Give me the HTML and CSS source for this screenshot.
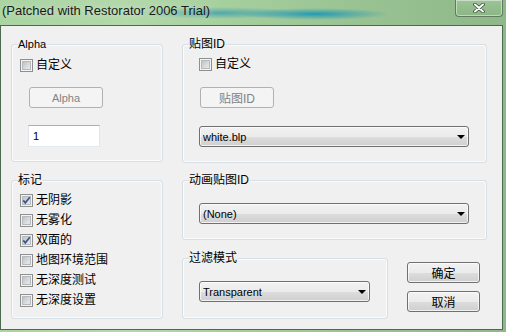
FILE: index.html
```html
<!DOCTYPE html>
<html lang="zh-CN">
<head>
<meta charset="UTF-8" />
<title>Patched with Restorator 2006 Trial</title>
<link rel="stylesheet" href="styles.css">
</head>
<body>
  <div class="window">
    <!-- Title bar -->
    <div class="titlebar">
      <span class="title">(Patched with Restorator 2006 Trial)</span>
      <button class="close" type="button">
        <svg width="12" height="10" viewBox="0 0 12 10">
          <path d="M2 1.5 L10 8.5 M10 1.5 L2 8.5" stroke="#3a4a3a" stroke-width="3.6" stroke-linecap="round" />
          <path d="M2 1.5 L10 8.5 M10 1.5 L2 8.5" stroke="#ffffff" stroke-width="2" stroke-linecap="round" />
        </svg>
      </button>
    </div>

    <!-- Dialog body -->
    <div class="client">
      <div class="layout">
        <section class="group g-alpha">
          <div class="group-title latin">Alpha</div>
          <label class="check-row"><span class="check"></span>自定义</label>
          <button class="btn btn-disabled latin" type="button">Alpha</button>
          <div class="edit latin">1</div>
        </section>

        <section class="group g-tex">
          <div class="group-title">贴图ID</div>
          <label class="check-row"><span class="check"></span>自定义</label>
          <button class="btn btn-disabled" type="button">贴图ID</button>
          <div class="combo combo-wide latin">white.blp</div>
        </section>

        <section class="group g-flags">
          <div class="group-title">标记</div>
          <div class="check-list">
            <label class="check-row"><span class="check checked"><svg width="11" height="11" viewBox="0 0 11 11"><path d="M2.3 5.4 L4.3 7.8 L8.8 2.2" fill="none" stroke="#3f5488" stroke-width="1.7" /></svg></span>无阴影</label>
            <label class="check-row"><span class="check"></span>无雾化</label>
            <label class="check-row"><span class="check checked"><svg width="11" height="11" viewBox="0 0 11 11"><path d="M2.3 5.4 L4.3 7.8 L8.8 2.2" fill="none" stroke="#3f5488" stroke-width="1.7" /></svg></span>双面的</label>
            <label class="check-row"><span class="check"></span>地图环境范围</label>
            <label class="check-row"><span class="check"></span>无深度测试</label>
            <label class="check-row"><span class="check"></span>无深度设置</label>
          </div>
        </section>

        <div class="right-bottom">
          <section class="group g-anim">
            <div class="group-title">动画贴图ID</div>
            <div class="combo combo-wide latin">(None)</div>
          </section>

          <div class="filter-row">
            <section class="group g-filter">
              <div class="group-title">过滤模式</div>
              <div class="combo combo-narrow latin">Transparent</div>
            </section>
            <div class="actions">
              <button class="btn" type="button">确定</button>
              <button class="btn" type="button">取消</button>
            </div>
          </div>
        </div>
      </div>
    </div>
  </div>
</body>
</html>
```

FILE: styles.css
```css
* {
  margin: 0;
  padding: 0;
  box-sizing: border-box;
}

html, body {
  width: 506px;
  height: 332px;
  overflow: hidden;
}

body {
  font-family: "Liberation Sans", "Noto Sans CJK SC", sans-serif;
  font-size: 12px;
  color: #000;
  background: #8db889;
}

.latin {
  font-size: 11px;
}

/* Aero frame */
.window {
  height: 332px;
  background:
    radial-gradient(ellipse 75px 6px at 315px 14px, rgba(30, 150, 180, 0.95), rgba(30, 150, 180, 0) 100%),
    radial-gradient(ellipse 80px 6px at 220px 13px, rgba(50, 155, 175, 0.75), rgba(50, 155, 175, 0) 100%),
    linear-gradient(90deg, #aad4a2 0%, #b3d9ab 25%, #a6cf9e 45%, #9ac393 70%, #8fb88a 100%);
}

.titlebar {
  height: 25px;
  display: flex;
  align-items: flex-start;
}

.title {
  padding: 3px 0 0 2px;
  font-size: 13px;
  line-height: 16px;
  color: #1a1a1a;
  text-shadow: 0 0 6px rgba(255, 255, 255, 0.5);
}

.close {
  margin-left: auto;
  margin-right: 3px;
  width: 48px;
  height: 17px;
  display: flex;
  align-items: center;
  justify-content: center;
  border: 1px solid #5f7d5e;
  border-top: none;
  border-radius: 0 0 4px 4px;
  background: linear-gradient(#9cc496, #8cb686);
  box-shadow: inset 0 0 0 1px rgba(255, 255, 255, 0.45);
}

/* Client area */
.client {
  width: 503px;
  height: 305px;
  border: 1px solid #4d6a4e;
  background: #f0f0f0;
}

.layout {
  display: grid;
  grid-template-columns: 152px 305px;
  grid-template-rows: 118px 139px;
  column-gap: 19px;
  row-gap: 18px;
  padding: 18px 0 0 10px;
}

.group {
  display: flex;
  flex-direction: column;
  align-items: flex-start;
  border: 1px solid #d5dfe5;
  border-radius: 3px;
  box-shadow: inset 0 0 0 1px #fbfbfb;
}

.group-title {
  margin: -7px 0 0 6px;
  padding: 0 1px 0 0;
  line-height: 13px;
  height: 13px;
  background: #f0f0f0;
  white-space: nowrap;
}

.g-alpha { height: 118px; }
.g-tex { height: 119px; }
.g-flags { height: 139px; }
.g-anim { height: 60px; }
.g-filter { width: 206px; height: 61px; }

/* Checkboxes */
.check-row {
  display: flex;
  align-items: center;
  gap: 3px;
  height: 13px;
  line-height: 13px;
  white-space: nowrap;
}

.check {
  width: 13px;
  height: 13px;
  border: 1px solid #8e8f8f;
  background: linear-gradient(135deg, #b3b7bb 0%, #dcdee0 60%, #f1f1f1 100%);
  box-shadow: inset 0 0 0 1px #f4f4f4, inset 0 0 0 2px #b6babe;
}

.check svg {
  display: block;
}

.g-alpha .check-row { margin: 8px 0 0 8px; }
.g-tex .check-row { margin: 7px 0 0 16px; }

.check-list {
  display: flex;
  flex-direction: column;
  gap: 7px;
  margin: 7px 0 0 8px;
}

/* Buttons */
.btn {
  width: 73px;
  height: 21px;
  font-family: inherit;
  font-size: 12px;
  color: #000;
  border: 1px solid #707070;
  border-radius: 3px;
  background: linear-gradient(#f2f2f2 0%, #ebebeb 50%, #dddddd 51%, #cfcfcf 100%);
  box-shadow: inset 0 0 0 1px rgba(255, 255, 255, 0.7);
}

.btn.latin {
  font-size: 11px;
}

.btn-disabled {
  width: 74px;
  color: #838383;
  border-color: #adb2b5;
  background: #f4f4f4;
  box-shadow: none;
}

.g-alpha .btn { margin: 15px 0 0 17px; }
.g-tex .btn { margin: 16px 0 0 17px; }

.edit {
  width: 72px;
  height: 22px;
  margin: 17px 0 0 16px;
  padding: 0 4px;
  line-height: 20px;
  background: #fff;
  border: 1px solid #e2e3ea;
  border-top-color: #abadb3;
  border-bottom-color: #e3e9ef;
}

/* Combo boxes */
.combo {
  height: 21px;
  display: flex;
  align-items: center;
  padding: 0 0 0 3px;
  border: 1px solid #707070;
  border-radius: 3px;
  background: linear-gradient(#f2f2f2 0%, #ebebeb 50%, #dddddd 51%, #cfcfcf 100%);
  box-shadow: inset 0 0 0 1px rgba(255, 255, 255, 0.7);
}

.combo::after {
  content: "";
  margin-left: auto;
  margin-right: 3px;
  border-left: 4px solid transparent;
  border-right: 4px solid transparent;
  border-top: 4px solid #000;
}

.combo-wide { width: 270px; }
.combo-narrow { width: 171px; }

.g-tex .combo { margin: 18px 0 0 16px; }
.g-anim .combo { margin: 16px 0 0 16px; }
.g-filter .combo { margin: 16px 0 0 16px; }

/* Right column bottom */
.right-bottom {
  display: flex;
  flex-direction: column;
  gap: 18px;
}

.filter-row {
  display: flex;
  gap: 19px;
}

.actions {
  display: flex;
  flex-direction: column;
  gap: 8px;
  padding-top: 4px;
}
```
